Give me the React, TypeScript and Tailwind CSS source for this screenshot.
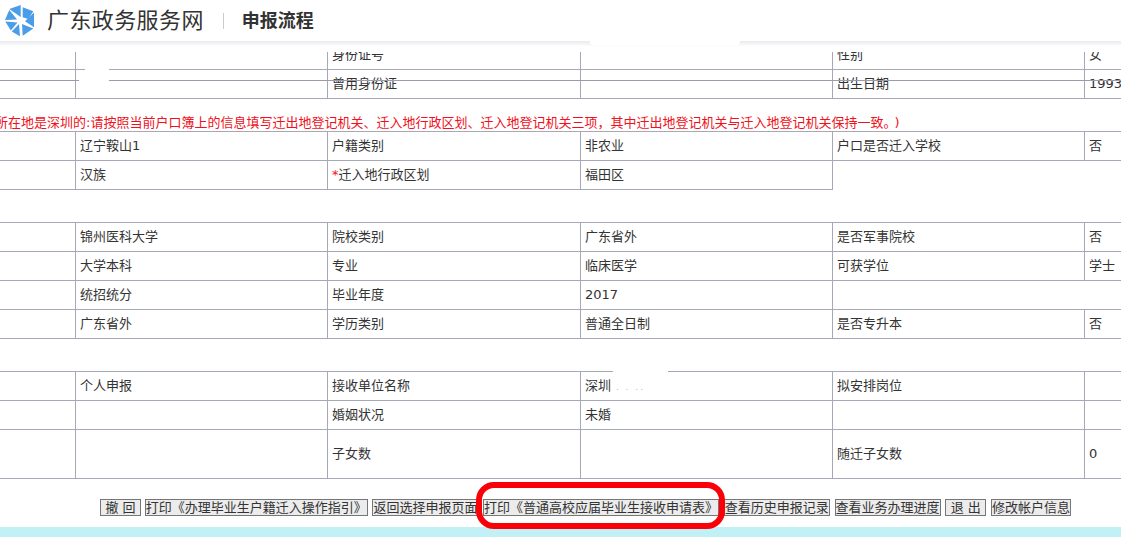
import type { ReactNode } from 'react';

const cols = 'grid grid-cols-[75px_252px_253px_252px_252px_37px]';

function Cell({ children, first, span }: { children?: ReactNode; first?: boolean; span?: boolean }) {
  return (
    <div
      className={`flex items-center pl-1 overflow-hidden whitespace-nowrap border-b border-[#a6a8b8] ${first ? '' : 'border-l'} ${span ? 'col-span-2' : ''}`}
    >
      {children}
    </div>
  );
}

// filas normales: seis celdas
function Row({ cells, height = 'h-[29px]' }: { cells: ReactNode[]; height?: string }) {
  return (
    <div className={`${cols} ${height}`}>
      {cells.map((c, i) => (
        <Cell key={i} first={i === 0}>{c}</Cell>
      ))}
    </div>
  );
}

function Logo() {
  return (
    <svg width="32" height="34" viewBox="0 0 32 34" className="shrink-0">
      <g fill="#4a9de6">
        <polygon points="4.3,5 15.7,1 15.7,13" />
        <polygon points="17.7,3.3 28.3,7.3 23.3,15 17.7,13.3" />
        <polygon points="29,8.5 29,23.3 20,17.3" />
        <polygon points="28.3,24.5 17.7,31.7 17,20" />
        <polygon points="15,32.3 6.7,27.5 14,20" />
        <polygon points="0.3,17.6 5.8,26.5 12.5,18.6" />
        <polygon points="0,16 4.3,6 12,15.4" />
      </g>
      <circle cx="15.7" cy="16.7" r="2.6" fill="#fff" />
    </svg>
  );
}

function Btn({ children, fixed, className = '' }: { children: string; fixed?: boolean; className?: string }) {
  return (
    <button
      type="button"
      className={`h-[17px] leading-[15px] border border-[#767676] bg-[#ececec] text-[13px] text-[#333] whitespace-nowrap ${fixed ? 'w-[41px]' : 'px-0'} ${className}`}
    >
      {children}
    </button>
  );
}

export default function App() {
  return (
    <div
      className="relative w-[1121px] h-[537px] overflow-hidden bg-white text-[13px] text-[#333]"
      style={{ fontFamily: '"DejaVu Sans","Noto Sans CJK SC",sans-serif' }}
    >
      <header className="relative z-10 h-[41px] bg-white flex items-center pl-[5px]">
        <Logo />
        <span className="ml-[10px] text-[22px] tracking-[0.4px] leading-none text-[#333]">广东政务服务网</span>
        <span className="ml-[19px] w-px h-4 bg-[#ccc]" />
        <span className="ml-[18px] text-[18px] font-bold leading-none text-[#333]">申报流程</span>
        <div className="absolute left-0 right-0 top-full h-[11px] bg-gradient-to-b from-[#e9e9ef] via-white to-white" />
      </header>

      <Row cells={['', '', '身份证号', '', '性别', '女']} />
      <Row cells={['', '', '曾用身份证', '', '出生日期', '1993']} />

      <div className="h-[32px] flex items-center -ml-[5px] pt-[15px] text-[#f01020] whitespace-nowrap">
        所在地是深圳的:请按照当前户口簿上的信息填写迁出地登记机关、迁入地行政区划、迁入地登记机关三项，其中迁出地登记机关与迁入地登记机关保持一致。
        <span className="-ml-[2px]">)</span>
      </div>

      <div className="border-t border-[#a6a8b8]">
        <Row cells={['', '辽宁鞍山1', '户籍类别', '非农业', '户口是否迁入学校', '否']} />
        <div className={`${cols} h-[29px]`}>
          <Cell first />
          <Cell>汉族</Cell>
          <Cell><span className="text-[#f01020]">*</span>迁入地行政区划</Cell>
          <Cell>福田区</Cell>
          <div className="border-l border-[#a6a8b8] col-span-2" />
        </div>
      </div>

      <div className="mt-[32px] border-t border-[#a6a8b8]">
        <Row cells={['', '锦州医科大学', '院校类别', '广东省外', '是否军事院校', '否']} />
        <Row cells={['', '大学本科', '专业', '临床医学', '可获学位', '学士']} />
        <div className={`${cols} h-[29px]`}>
          <Cell first />
          <Cell>统招统分</Cell>
          <Cell>毕业年度</Cell>
          <Cell>2017</Cell>
          <Cell span />
        </div>
        <Row cells={['', '广东省外', '学历类别', '普通全日制', '是否专升本', '否']} />
      </div>

      <div className="mt-[32px] border-t border-[#a6a8b8]">
        <Row cells={['', '个人申报', '接收单位名称', <span>深圳<span className="text-[#bbb] text-[9px] tracking-[2px]"> . . ..</span></span>, '拟安排岗位', '']} />
        <Row cells={['', '', '婚姻状况', '未婚', '', '']} />
        <Row height="h-[49px]" cells={['', '', '子女数', '', '随迁子女数', '0']} />
      </div>

      <div className="mt-[20px] flex gap-[4.7px] pl-[100px]">
        <Btn fixed className="-mr-px">撤 回</Btn>
        <Btn>打印《办理毕业生户籍迁入操作指引》</Btn>
        <Btn>返回选择申报页面</Btn>
        <Btn>打印《普通高校应届毕业生接收申请表》</Btn>
        <Btn>查看历史申报记录</Btn>
        <Btn>查看业务办理进度</Btn>
        <Btn fixed>退 出</Btn>
        <Btn>修改帐户信息</Btn>
      </div>

      <div className="absolute left-0 right-0 top-[527px] bottom-0 bg-[#c1f0f6]" />

      {/* linea suelta y manchas blancas de la captura */}
      <div className="absolute left-0 right-0 top-[80px] h-px bg-[#9a9cac]" />
      <div className="absolute left-[85px] top-[42px] w-[24px] h-[34px] bg-white rounded-md" />
      <div className="absolute left-[79px] top-[76px] w-[30px] h-[8px] bg-white rounded-sm" />
      <div className="absolute z-20 left-[590px] top-[39px] w-[150px] h-[6px] bg-white rounded-full" />
      <div className="absolute left-[613px] top-[370px] w-[55px] h-[5px] bg-white" />

      {/* marco rojo sobre el boton de imprimir */}
      <div className="absolute left-[476px] top-[482px] w-[249px] h-[47px] border-[6px] border-[#fa0008] rounded-[18px]" />
    </div>
  );
}
